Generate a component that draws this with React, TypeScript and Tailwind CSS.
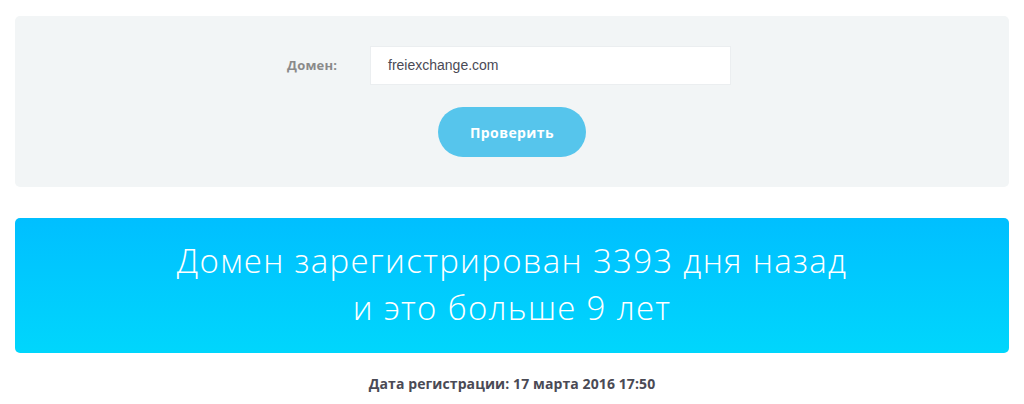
import React from "react";

export default function App() {
  const mont = { fontFamily: '"Open Sans", "DejaVu Sans", sans-serif' };
  return (
    <div className="w-[1024px] h-[404px] bg-white overflow-hidden" style={mont}>
      <div className="px-[15px] pt-[16px]">
        <div className="bg-[#f2f5f6] rounded-[5px] h-[171px] pt-[30px] flex flex-col items-center">
          <div className="flex items-center ml-[-6px]">
            <label className="text-[13px] font-bold text-[#8a8a8a] w-[83px] tracking-[0.2px]">Домен:</label>
            <div className="w-[361px] h-[39px] bg-white border border-[#ebeef0] flex items-center pl-[17px]">
              <span className="text-[14px] text-[#4a4a55]" style={{ fontFamily: '"Liberation Sans", Arial, sans-serif' }}>
                freiexchange.com
              </span>
            </div>
          </div>
          <button className="mt-[22px] w-[148px] h-[50px] rounded-full bg-[#56c5ec] text-white text-[14px] font-bold tracking-[0.4px]">
            Проверить
          </button>
        </div>
        <div className="mt-[31px] h-[135px] pb-[4px] rounded-[5px] bg-gradient-to-b from-[#00bfff] to-[#00d6fc] flex flex-col items-center justify-center text-white text-[33px] font-light leading-[47px] tracking-[1.3px]">
          <div>Домен зарегистрирован 3393 дня назад</div>
          <div>и это больше 9 лет</div>
        </div>
        <div className="mt-[20px] text-center text-[14px] font-bold text-[#4a4a55] tracking-[0.1px]">
          Дата регистрации: 17 марта 2016 17:50
        </div>
      </div>
    </div>
  );
}
